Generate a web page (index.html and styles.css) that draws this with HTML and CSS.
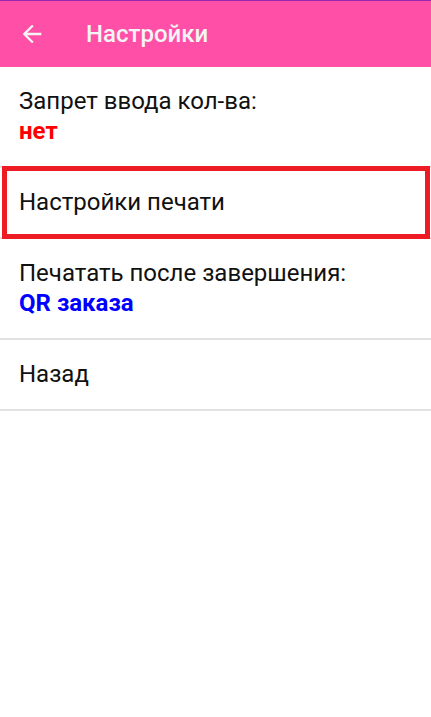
FILE: index.html
```html
<!DOCTYPE html>
<html lang="ru">
 <head>
  <meta charset="utf-8">
  <title>Настройки</title>
  <link rel="stylesheet" href="styles.css">
 </head>
 <body>
  <header class="toolbar">
   <svg class="back" viewBox="0 0 24 24" width="28" height="28"><path d="M20 11H7.83l5.59-5.59L12 4l-8 8 8 8 1.41-1.41L7.83 13H20v-2z" fill="currentColor"/></svg>
   <h1 class="title">Настройки</h1>
  </header>
  <ul class="menu">
   <li class="item">
    <span class="label">Запрет ввода кол-ва:</span>
    <span class="value value-red">нет</span>
   </li>
   <li class="item">
    <span class="label">Настройки печати</span>
   </li>
   <li class="item">
    <span class="label">Печатать после завершения:</span>
    <span class="value value-blue">QR заказа</span>
   </li>
   <li class="item">
    <span class="label">Назад</span>
   </li>
  </ul>
  <div class="highlight"></div>
 </body>
</html>
```

FILE: styles.css
```css
html, body {
  margin:0; height:100%;
  background:#fff;
  font-family:Roboto, "Noto Sans", sans-serif;
}
.toolbar {
  display:flex; align-items:center;
  height:66px;
  border-top:1px solid #9c27b0;
  background:#ff4fa6;
  color:#f4f4f4;
}
.back {
  margin-left:18px;
  flex:none;
}
.title {
  margin:0 0 0 40px;
  font-size:24px; font-weight:500;
}
.menu {
  list-style:none; margin:0; padding:0;
}
.item {
  display:flex; flex-direction:column; justify-content:center;
  padding:19px 19px 20px;
  border-bottom:2px solid #e2e2e2;
  font-size:24px; line-height:30px;
  color:#111;
}
.value {
  font-weight:bold;
}
.value-red { color:#ff0000; }
.value-blue { color:#0000ff; }
.highlight {
  position:absolute; left:2px; top:166px;
  width:418px; height:63px;
  border:5px solid #ed1c24;
}
```
